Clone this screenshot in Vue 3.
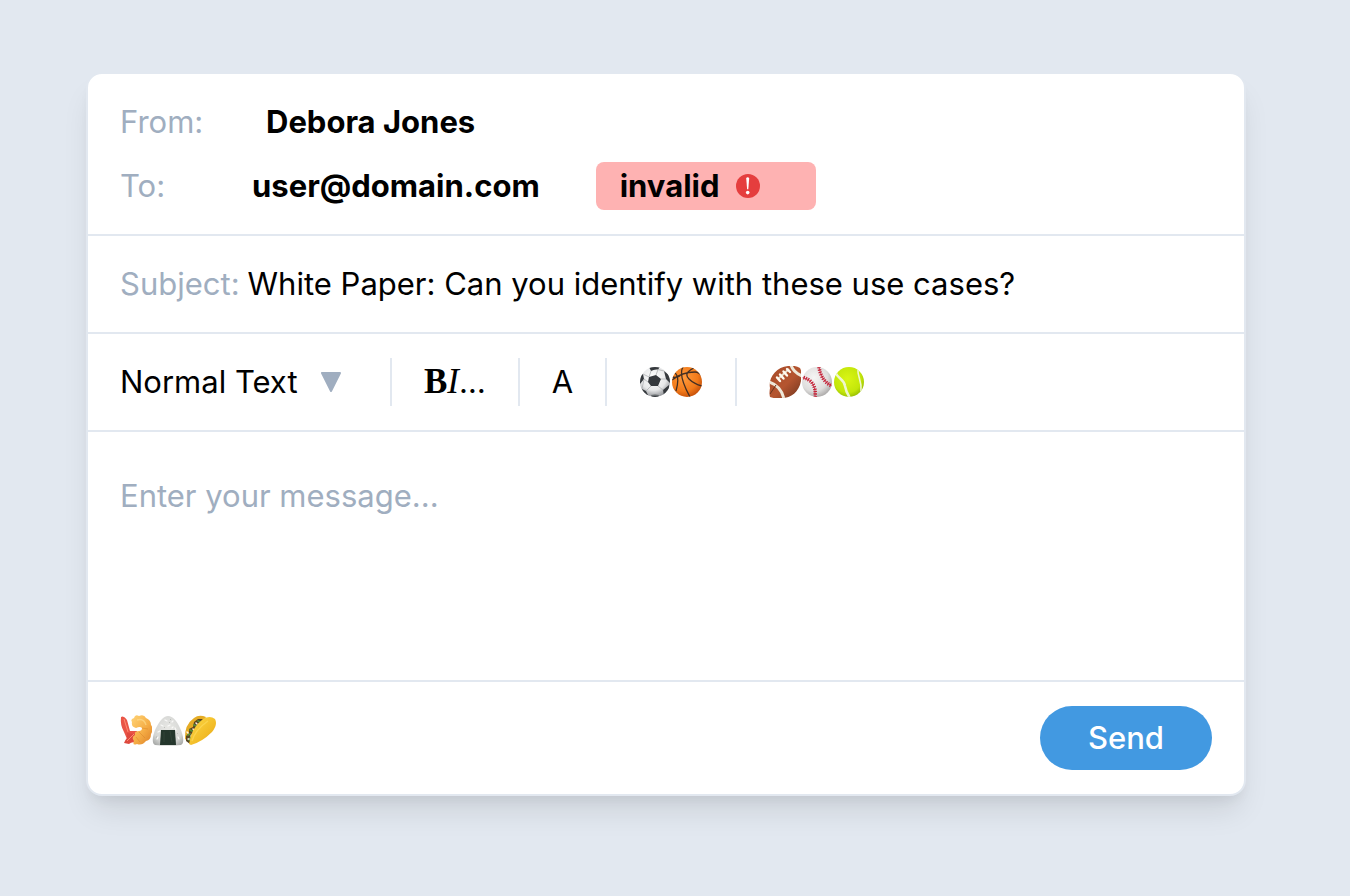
<script setup>
import { ref } from 'vue'

const subject = ref('White Paper: Can you identify with these use cases?')
const message = ref('')
const textStyle = ref('Normal Text')
</script>

<template>
  <main class="page">
    <form class="card" @submit.prevent>
      <section class="section">
        <div class="field">
          <span class="label">From:</span>
          <strong class="sender">Debora Jones</strong>
        </div>
        <div class="field">
          <span class="label">To:</span>
          <div class="recipients">
            <strong class="chip">user@domain.com</strong>
            <strong class="chip invalid">
              <span>invalid</span>
              <svg class="alert" viewBox="0 0 24 24" aria-hidden="true">
                <circle cx="12" cy="12" r="12" fill="#e53e3e" />
                <path d="M10.200 4Q11.700 2.400 13.200 4L12.300 15.200H11.100Z" fill="#fff" />
                <circle cx="11.700" cy="18.600" r="1.800" fill="#fff" />
              </svg>
            </strong>
          </div>
        </div>
      </section>

      <section class="section subject">
        <label class="muted" for="subject">Subject:</label>
        <input id="subject" v-model="subject" class="subject-input" type="text" />
      </section>

      <section class="section toolbar">
        <div class="group select-wrap">
          <select v-model="textStyle" class="select" aria-label="Text style">
            <option>Normal Text</option>
          </select>
          <svg class="arrow" viewBox="0 0 20 20" aria-hidden="true">
            <path d="M1 1H19L10 19Z" fill="#a0aec0" stroke="#a0aec0" stroke-width="2" stroke-linejoin="round" />
          </svg>
        </div>
        <div class="group">
          <button type="button" class="tool format"><b>B</b><i>I</i><span class="dots">…</span></button>
        </div>
        <div class="group">
          <button type="button" class="tool">A</button>
        </div>
        <div class="group">
          <button type="button" class="tool emoji" aria-label="Soccer ball">
            <svg viewBox="0 0 32 32">
              <defs>
                <radialGradient id="soccerFill" cx=".45" cy=".35" r=".65">
                  <stop offset="0" stop-color="#fff" /><stop offset=".65" stop-color="#e7e8e9" /><stop offset="1" stop-color="#929498" />
                </radialGradient>
                <clipPath id="ballClip"><circle cx="16" cy="16" r="15" /></clipPath>
              </defs>
              <circle cx="16" cy="16" r="15" fill="url(#soccerFill)" />
              <g clip-path="url(#ballClip)">
                <path d="M10 11L17 9L22 13L19 20L12 20L9 16Z M10 1L21 1L19 3.500Q15 3 12 5Z M0 11L4 8L5 13L1 18Z M25 5L31 10V17L27 13Z M3 23L7 25L10 31L4 29Z M12 29Q16 28 20 29L19 32H13Z M24 24L30 19L30 25L25 30Z" fill="#35393d" />
                <path d="M10 11L4 8M17 9L19 3.500M12 5L10 11M9 16L5 13M12 20L7 25M19 20L24 24M22 13L27 13M19 3.500L25 5M5 13L3 23M10 29H20L24 24" fill="none" stroke="#aeb1b4" stroke-width=".8" />
              </g>
            </svg>
          </button>
          <button type="button" class="tool emoji" aria-label="Basketball">
            <svg viewBox="0 0 32 32">
              <defs>
                <radialGradient id="basketFill" cx=".4" cy=".35" r=".7">
                  <stop offset="0" stop-color="#ff9a3b" /><stop offset=".65" stop-color="#f27a1a" /><stop offset="1" stop-color="#c34d08" />
                </radialGradient>
              </defs>
              <circle cx="16" cy="16" r="15" fill="url(#basketFill)" />
              <g clip-path="url(#ballClip)" fill="none" stroke="#432f23" stroke-width="1.300">
                <path d="M1 14Q11 6 24 6Q28 6 31 10M12 1Q7 9 19 31M23 2Q12 7 18 13Q23 18 31 20M4 7Q9 11 5 25M1 11Q6 12 9 10" />
              </g>
            </svg>
          </button>
        </div>
        <div class="group">
          <button type="button" class="tool emoji" aria-label="Football">
            <svg viewBox="0 0 32 32">
              <defs>
                <linearGradient id="footballFill" x1="0" y1="0" x2="1" y2="1">
                  <stop offset="0" stop-color="#a64b29" /><stop offset=".55" stop-color="#b55530" /><stop offset="1" stop-color="#70351f" />
                </linearGradient>
                <clipPath id="footballClip">
                  <path d="M1 22C-1 12 7 1 19 0Q26-1 31 2Q34 8 32 15C30 26 22 32 13 32Q6 33 1 31Q0 27 1 22Z" />
                </clipPath>
              </defs>
              <g clip-path="url(#footballClip)">
                <path d="M0 0H32V32H0Z" fill="url(#footballFill)" />
                <path d="M0 16Q12 20 15 33M22-1Q24 6 33 10" fill="none" stroke="#eee8d9" stroke-width="3" />
                <path d="M1 28L7 19" stroke="#66351f" stroke-width="1" />
                <path d="M9 13L20 3" stroke="#e7ddca" stroke-width="2" />
                <path d="M8 11.500L11 15M11 8.500L14.500 12.500M14.500 5.500L18 9.500M18 3L21 6" stroke="#fffaf0" stroke-width="2.400" stroke-linecap="round" />
              </g>
            </svg>
          </button>
          <button type="button" class="tool emoji" aria-label="Baseball">
            <svg viewBox="0 0 32 32">
              <defs>
                <radialGradient id="baseFill" cx=".4" cy=".35" r=".7">
                  <stop offset="0" stop-color="#f6f5f4" /><stop offset=".65" stop-color="#dedddc" /><stop offset="1" stop-color="#a7a5a4" />
                </radialGradient>
              </defs>
              <circle cx="16" cy="16" r="15" fill="url(#baseFill)" />
              <g clip-path="url(#ballClip)" fill="none" stroke="#c52238">
                <path d="M0 11Q16 14 14 31M18 1Q20 15 31 20" stroke-width=".8" />
                <path d="M0 11Q16 14 14 31M18 1Q20 15 31 20" stroke-width="3.600" stroke-dasharray="1.200 1.200" />
              </g>
            </svg>
          </button>
          <button type="button" class="tool emoji" aria-label="Tennis ball">
            <svg viewBox="0 0 32 32">
              <defs>
                <radialGradient id="tennisFill" cx=".45" cy=".4" r=".65">
                  <stop offset="0" stop-color="#d9f514" /><stop offset=".7" stop-color="#c3e60a" /><stop offset="1" stop-color="#8eb600" />
                </radialGradient>
              </defs>
              <circle cx="16" cy="16" r="15" fill="url(#tennisFill)" />
              <g clip-path="url(#ballClip)" fill="none" stroke="#eff7cf">
                <path d="M2 6C5 13 11 13 12 20Q13 26 17 32" stroke-width="2.500" />
                <path d="M25 3C24 10 29 14 28 25" stroke-width="1.600" />
              </g>
            </svg>
          </button>
        </div>
      </section>

      <section class="section body">
        <textarea v-model="message" class="message" rows="4" placeholder="Enter your message..." aria-label="Message"></textarea>
      </section>

      <footer class="footer">
        <div class="snacks">
          <button type="button" class="tool emoji" aria-label="Fried shrimp">
            <svg viewBox="0 0 32 32">
              <defs>
                <linearGradient id="shrimpFill" x1="0" y1="0" x2="1" y2="1">
                  <stop offset="0" stop-color="#ffd477" /><stop offset=".55" stop-color="#f5ad45" /><stop offset="1" stop-color="#dc7f27" />
                </linearGradient>
              </defs>
              <path d="M1 3Q4 1 7 6L10 17L17 17V27Q9 31 7 25L4 18Q0 11 1 3Z" fill="#e95446" />
              <path d="M7 19L15 20L15 26L9 30L4 29Q5 26 7 24Z" fill="#de493e" />
              <path d="M4 5L8 18M7 27L14 20" stroke="#ff8b70" fill="none" stroke-width="1" />
              <path d="M12 8Q10 5 14 4Q15 0 19 2Q24 0 26 4Q31 6 31 11Q34 15 31 20Q31 26 26 27Q22 32 17 30Q12 32 14 27Q11 23 15 21Q14 17 19 17Q22 17 22 14Q20 12 16 14Q11 13 12 8Z" fill="url(#shrimpFill)" />
              <path d="M17 6Q24 4 26 11" fill="none" stroke="#ffdf91" stroke-width="1.500" opacity=".6" />
              <path d="M22 14L28 15M19 18L25 24M16 23L20 28" fill="none" stroke="#d78326" stroke-width=".8" opacity=".6" />
            </svg>
          </button>
          <button type="button" class="tool emoji" aria-label="Rice ball">
            <svg viewBox="0 0 32 32">
              <defs>
                <radialGradient id="riceFill" cx=".5" cy=".4" r=".7">
                  <stop offset="0" stop-color="#e8e8e5" /><stop offset=".7" stop-color="#d5d6d4" /><stop offset="1" stop-color="#a9aba9" />
                </radialGradient>
              </defs>
              <path d="M3 31C-1 29 1 20 4 14C8 6 12 2 16 2C21 2 25 7 28 14C31 20 33 29 29 31Q16 32 3 31Z" fill="url(#riceFill)" />
              <path d="M13 6L15 7M20 8L21 7M9 11L11 12M16 12L18 11M23 14L24 16M6 18L8 17M5 25L6 23M26 23L27 25M20 14L21 13" stroke="#fafaf8" stroke-width="1.200" stroke-linecap="round" />
              <path d="M12 14L13 13M19 6L18 5M25 19L26 20M5 22L4 24M17 9L18 8" stroke="#b5b7b4" stroke-width=".8" />
              <path d="M9 16H23L24 31H8Z" fill="#24362c" />
              <path d="M12 18V28M18 17L20 28" stroke="#304237" stroke-width="1" />
            </svg>
          </button>
          <button type="button" class="tool emoji" aria-label="Taco">
            <svg viewBox="0 0 32 32">
              <defs>
                <linearGradient id="tacoFill" x1="0" y1="0" x2="1" y2="1">
                  <stop offset="0" stop-color="#ffdb48" /><stop offset=".65" stop-color="#f1ba25" /><stop offset="1" stop-color="#c5850b" />
                </linearGradient>
              </defs>
              <path d="M1 25Q0 11 10 4Q15 0 22 3L17 11L5 28Z" fill="#e5ac25" />
              <path d="M2 27L2 22L5 19L5 15L9 13L10 8L14 5L19 5L17 14L6 30Z" fill="#594421" />
              <path d="M4 21L6 20M6 16L8 17M10 11L12 12M14 7L16 8M5 26L7 23" stroke="#56913b" stroke-width="1.800" stroke-linecap="round" />
              <path d="M7 22L8 21M9 15L10 16M12 9L13 10M3 18L4 19M4 25H5" stroke="#fff2e4" stroke-width="1.500" stroke-linecap="round" />
              <path d="M8 19L9 20M12 13L14 12" stroke="#bd432e" stroke-width="1.500" />
              <path d="M5 30Q7 14 19 5Q26 1 31 5Q34 11 28 18Q18 28 7 31Z" fill="url(#tacoFill)" />
              <path d="M8 27Q11 16 24 7" fill="none" stroke="#ffe36b" stroke-width="1.500" opacity=".5" />
            </svg>
          </button>
        </div>
        <button type="submit" class="send">Send</button>
      </footer>
    </form>
  </main>
</template>

<style>
body {
  margin: 0;
  background: #e2e8f0;
}
</style>

<style scoped>
.page {
  padding: 72px 104px 72px 86px;
  font-family: Inter, "Liberation Sans", sans-serif;
  font-size: 31px;
  line-height: 48px;
  color: #000;
}
.card {
  border: 2px solid #e2e8f0;
  border-radius: 16px;
  background: #fff;
  box-shadow: 0 20px 30px -6px rgba(0, 0, 0, 0.1), 0 8px 12px -4px rgba(0, 0, 0, 0.05);
}
.section {
  padding: 24px 32px;
  border-bottom: 2px solid #e2e8f0;
}
.field {
  display: flex;
  align-items: center;
}
.field + .field {
  margin-top: 16px;
}
.label {
  flex: none;
  width: 108px;
}
.label,
.muted {
  color: #a0aec0;
}
strong {
  font-weight: 700;
}
.sender {
  padding-left: 38px;
}
.recipients {
  display: flex;
  gap: 32px;
}
.chip {
  padding: 0 24px;
  border-radius: 8px;
}
.invalid {
  display: flex;
  align-items: center;
  gap: 16px;
  padding-right: 56px;
  background: #feb2b2;
}
.alert {
  width: 24px;
  height: 24px;
}
input,
select,
textarea,
button {
  margin: 0;
  padding: 0;
  border: 0;
  background: none;
  color: inherit;
  font: inherit;
}
.subject {
  display: flex;
  gap: 8px;
}
.subject-input {
  flex: 1;
  min-width: 0;
  height: 48px;
}
.toolbar {
  display: flex;
}
.group {
  display: flex;
  padding: 0 32px;
  border-left: 2px solid #e2e8f0;
}
.select-wrap {
  display: grid;
  align-items: center;
  width: 238px;
  padding-left: 0;
  border-left: 0;
}
.select {
  grid-area: 1 / 1;
  width: 100%;
  height: 48px;
  appearance: none;
}
.arrow {
  grid-area: 1 / 1;
  justify-self: end;
  width: 20px;
  height: 20px;
  margin-right: 17px;
  pointer-events: none;
}
.tool {
  height: 48px;
}
.format {
  font-family: "Liberation Serif", serif;
  font-size: 35px;
}
.dots {
  font-family: Inter, sans-serif;
  font-size: 31px;
}
.emoji {
  display: flex;
  align-items: center;
  width: 32px;
}
.emoji svg {
  width: 32px;
  height: 32px;
}
.body {
  padding: 40px 32px 16px;
}
.message {
  display: block;
  width: 100%;
  height: 192px;
  resize: none;
}
.message::placeholder {
  color: #a0aec0;
  opacity: 1;
}
.footer {
  display: flex;
  justify-content: space-between;
  align-items: flex-start;
  padding: 24px 32px;
}
.snacks {
  display: flex;
}
.send {
  padding: 8px 48px;
  border-radius: 32px;
  background: #4299e1;
  color: #fff;
  font-weight: 500;
}
</style>
